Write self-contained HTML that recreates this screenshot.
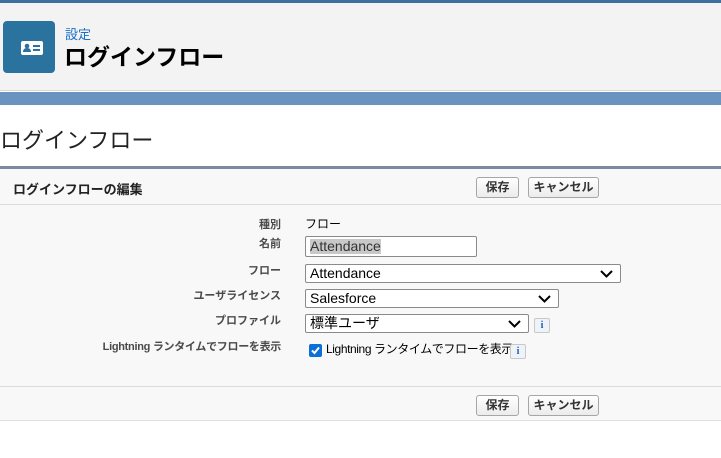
<!DOCTYPE html>
<html><head><meta charset="utf-8"><style>
*{margin:0;padding:0;box-sizing:border-box}
body{width:721px;height:458px;overflow:hidden;background:#fff;font-family:"Liberation Sans","Noto Sans CJK JP",sans-serif;position:relative}
.top{position:absolute;left:0;top:0;width:721px;height:3px;background:#3f6f9e}
.hdr{position:absolute;left:0;top:3px;width:721px;height:88px;background:#f3f3f3;border-bottom:1px solid #d8d8d8}
.band{position:absolute;left:0;top:92px;width:721px;height:13px;background:#6a93c0}
.icon{position:absolute;left:3px;top:21px;width:52px;height:52px;background:#2a739e;border-radius:4px}
.s1{position:absolute;left:65px;top:24px;font-size:13px;color:#1a6fc9}
.s2{position:absolute;left:64px;top:38px;font-size:23px;font-weight:bold;color:#000}
.t{position:absolute;left:0;top:123px;font-size:22px;color:#222}
.panel{position:absolute;left:0;top:166px;width:721px;height:255px;background:#f8f8f8;border-top:3px solid #7b8aa3;border-bottom:1px solid #e0e0e0}
.ph{position:absolute;left:0;top:0;width:721px;height:36px;border-bottom:1px solid #dcdcdc}
.ph span{position:absolute;left:13px;top:10px;font-size:13px;font-weight:bold;color:#222}
.btn{position:absolute;height:21px;border:1px solid #a6a6a6;border-radius:3px;background:linear-gradient(#fff,#ececec);font-size:12px;font-weight:bold;color:#333;text-align:center;line-height:19px}
.lbl{position:absolute;right:440px;font-size:11px;font-weight:bold;color:#4a4a4a;white-space:nowrap}
.v{position:absolute;font-size:13px;color:#000;white-space:nowrap}
.sel{position:absolute;height:19px;border:1px solid #8a8a8a;border-radius:2px;background:#fff;font-size:14px;padding-left:4px;line-height:17px}
.sel svg{position:absolute;right:7px;top:5px}
.info{position:absolute;width:16px;height:15px;border:1px solid #c8c8c8;border-radius:2px;background:#eef3fa;color:#1a5fb4;font-size:10px;font-weight:bold;text-align:center;line-height:13px;font-family:"Liberation Serif",serif}
.sep{position:absolute;left:0;top:217px;width:721px;border-top:1px solid #dcdcdc}
</style></head><body>
<div class="top"></div>
<div class="hdr"></div>
<div class="band"></div>
<div class="icon"><svg width="52" height="52" viewBox="0 0 52 52"><rect x="18" y="20" width="22" height="14" rx="2" fill="#fff"/><circle cx="24" cy="25" r="2.3" fill="#2a739e"/><path d="M20 31c0-3 2-4 4-4s4 1 4 4z" fill="#2a739e"/><rect x="30" y="24" width="7" height="2" fill="#2a739e"/><rect x="30" y="28" width="7" height="2" fill="#2a739e"/></svg></div>
<div class="s1">設定</div>
<div class="s2">ログインフロー</div>
<div class="t">ログインフロー</div>
<div class="panel">
 <div class="ph"><span>ログインフローの編集</span></div>
 <div class="btn" style="left:476px;top:8px;width:43px">保存</div>
 <div class="btn" style="left:528px;top:8px;width:71px">キャンセル</div>
 <div class="lbl" style="top:47px">種別</div><div class="v" style="left:305px;top:46px;font-size:12px">フロー</div>
 <div class="lbl" style="top:66px">名前</div>
 <div style="position:absolute;left:305px;top:67px;width:172px;height:21px;border:1px solid #8a8a8a;border-radius:2px;background:#fff"><span style="position:absolute;left:4px;top:2px;background:#c8c8c8;font-size:14px;color:#333;line-height:15px">Attendance</span></div>
 <div class="lbl" style="top:93px">フロー</div>
 <div class="sel" style="left:305px;top:95px;width:316px">Attendance<svg width="13" height="8"><path d="M1 1l5.5 5.5L12 1" stroke="#000" stroke-width="2" fill="none"/></svg></div>
 <div class="lbl" style="top:118px">ユーザライセンス</div>
 <div class="sel" style="left:305px;top:120px;width:254px">Salesforce<svg width="13" height="8"><path d="M1 1l5.5 5.5L12 1" stroke="#000" stroke-width="2" fill="none"/></svg></div>
 <div class="lbl" style="top:143px">プロファイル</div>
 <div class="sel" style="left:305px;top:145px;width:224px">標準ユーザ<svg width="13" height="8"><path d="M1 1l5.5 5.5L12 1" stroke="#000" stroke-width="2" fill="none"/></svg></div>
 <div class="info" style="left:534px;top:149px">i</div>
 <div class="lbl" style="top:169px;letter-spacing:-0.3px">Lightning ランタイムでフローを表示</div>
 <div style="position:absolute;left:309px;top:175px;width:13px;height:13px;background:#0b6fd6;border-radius:2px"><svg width="13" height="13"><path d="M3 6.5l2.5 2.5L10 3.5" stroke="#fff" stroke-width="2" fill="none"/></svg></div>
 <div class="v" style="left:326px;top:171px;font-size:12px;letter-spacing:-0.4px">Lightning ランタイムでフローを表示</div>
 <div class="info" style="left:510px;top:175px">i</div>
 <div class="sep"></div>
 <div class="btn" style="left:476px;top:226px;width:43px">保存</div>
 <div class="btn" style="left:528px;top:226px;width:71px">キャンセル</div>
</div>
</body></html>
